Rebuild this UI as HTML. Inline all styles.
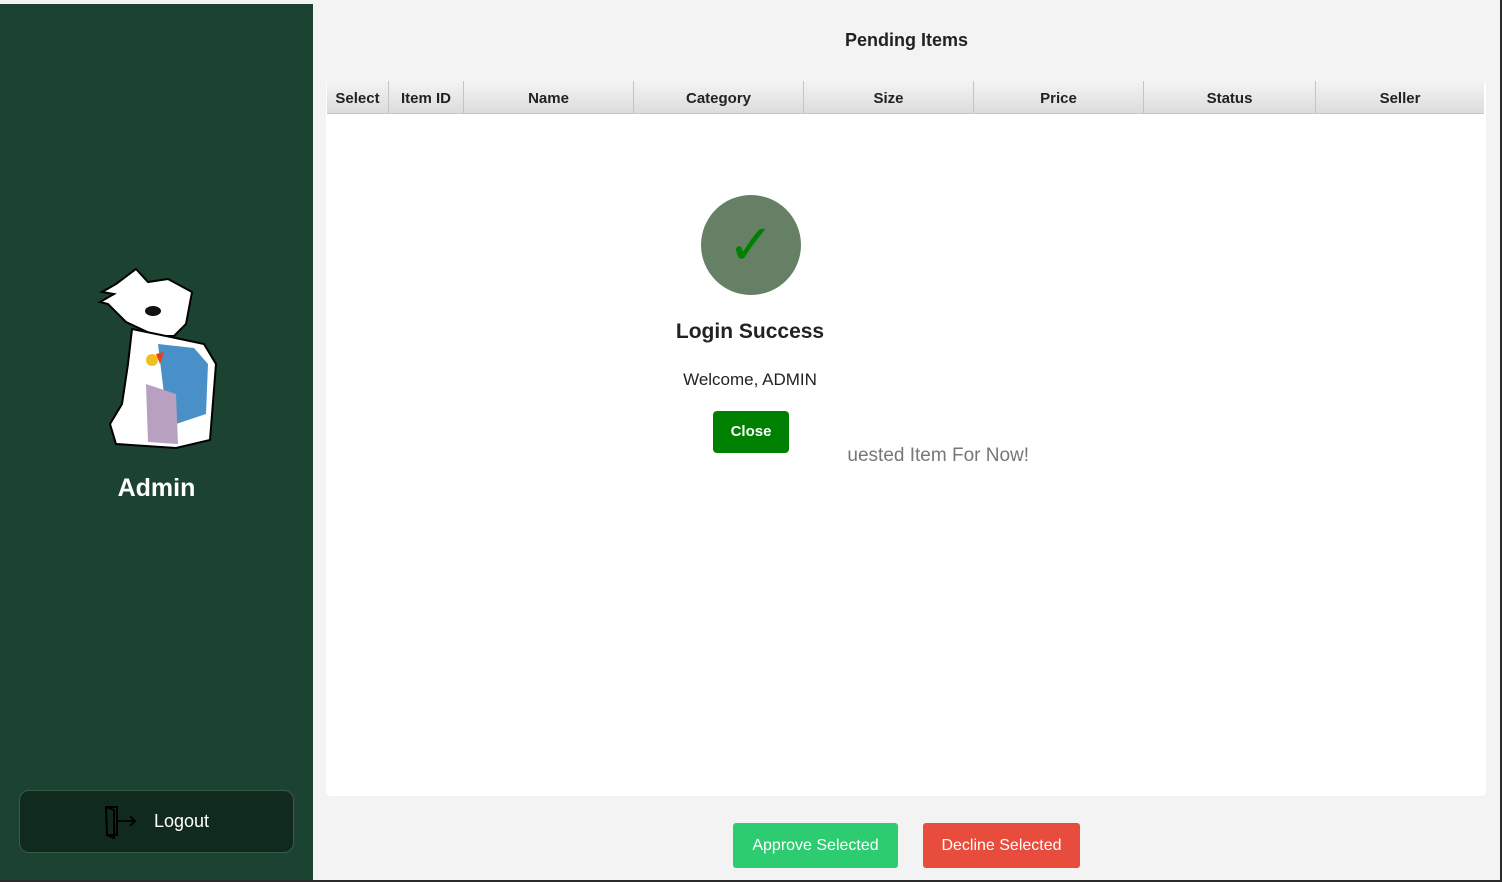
<!DOCTYPE html><html><head><style>
body{margin:0;width:1502px;height:882px;background:#2b2b2b;position:relative;overflow:hidden;font-family:"Liberation Sans",sans-serif}
.side{position:absolute;left:0;top:4px;width:313px;height:876px;background:#1c4332}
.main{position:absolute;left:0;top:0;width:1500px;height:880px;background:#f3f3f3}
.tbl{position:absolute;left:326px;top:81px;width:1160px;height:715px;background:#fff;border-radius:4px}
.hd{position:absolute;left:327px;top:81px;height:32px;display:flex;border-bottom:1px solid #c8c8c8}
.hd div{background:linear-gradient(#f4f4f4,#dcdcdc);border-right:1px solid #c4c4c4;font-weight:bold;font-size:15px;color:#222;text-align:center;line-height:36px;box-sizing:border-box}
.btn{position:absolute;top:823px;height:45px;border-radius:3px;color:#fff;font-size:16px;text-align:center;line-height:46px}
</style></head><body>
<div class="main"></div>
<div class="side">
<svg style="position:absolute;left:96px;top:260px" width="124" height="190" viewBox="0 0 124 190">
<path d="M40 5 L52 18 L72 15 L96 28 L90 60 L78 72 L60 72 L30 58 L12 40 L4 38 L18 30 L6 28 L20 20 Z" fill="#fff" stroke="#000" stroke-width="2"/>
<ellipse cx="57" cy="47" rx="8" ry="5" fill="#111"/>
<path d="M36 65 L70 72 L108 80 L120 100 L114 176 L80 184 L20 180 L14 160 L26 140 L32 100 Z" fill="#fff" stroke="#000" stroke-width="2"/>
<path d="M62 80 L98 84 L112 100 L110 150 L80 160 L68 130 Z" fill="#4a90c8"/>
<path d="M50 120 L80 130 L82 180 L52 178 Z" fill="#b8a0c0"/>
<circle cx="56" cy="96" r="6" fill="#f0c020"/><path d="M60 90 L68 88 L64 100 Z" fill="#e84010"/>
</svg>
<div style="position:absolute;left:0;width:313px;top:470px;text-align:center;color:#fff;font-weight:bold;font-size:25px">Admin</div>
<div style="position:absolute;left:19px;top:786px;width:273px;height:61px;background:#112a1e;border:1px solid #3a5a48;border-radius:10px">
<svg style="position:absolute;left:84px;top:14px" width="34" height="34" viewBox="0 0 34 34"><path d="M2 2 H13 V30 H3 Z M2 2 L10 5 V33 L3 30" fill="none" stroke="#000" stroke-width="2"/><path d="M13 16 H31 M26 11 L31 16 L26 21" fill="none" stroke="#000" stroke-width="1.8"/></svg>
<div style="position:absolute;left:134px;top:20px;color:#fff;font-size:18px">Logout</div></div>
</div>
<div style="position:absolute;left:313px;width:1187px;top:30px;text-align:center;font-weight:bold;font-size:18px;color:#222">Pending Items</div>
<div class="tbl"></div>
<div class="hd"><div style="width:62px">Select</div><div style="width:75px">Item ID</div><div style="width:170px">Name</div><div style="width:170px">Category</div><div style="width:170px">Size</div><div style="width:170px">Price</div><div style="width:172px">Status</div><div style="width:168px;border-right:0">Seller</div></div>
<div style="position:absolute;left:783px;top:445px;font-size:19px;color:#777">No Requested Item For Now!</div>
<div style="position:absolute;left:652px;top:170px;width:196px;height:307px;background:#fff;border-radius:8px">
<div style="position:absolute;left:49px;top:25px;width:100px;height:100px;border-radius:50%;background:#668066;color:#008000;font-size:56px;text-align:center;line-height:100px">✓</div>
<div style="position:absolute;width:196px;top:150px;text-align:center;font-weight:bold;font-size:21px;color:#222">Login Success</div>
<div style="position:absolute;width:196px;top:200px;text-align:center;font-size:17px;color:#222">Welcome, ADMIN</div>
<div style="position:absolute;left:61px;top:241px;width:76px;height:42px;background:#008000;border-radius:4px;color:#fff;font-weight:bold;font-size:15px;text-align:center;line-height:42px">Close</div>
</div>
<div class="btn" style="left:733px;width:165px;background:#2ecc71">Approve Selected</div>
<div class="btn" style="left:923px;width:157px;background:#e74c3c">Decline Selected</div>
</body></html>
